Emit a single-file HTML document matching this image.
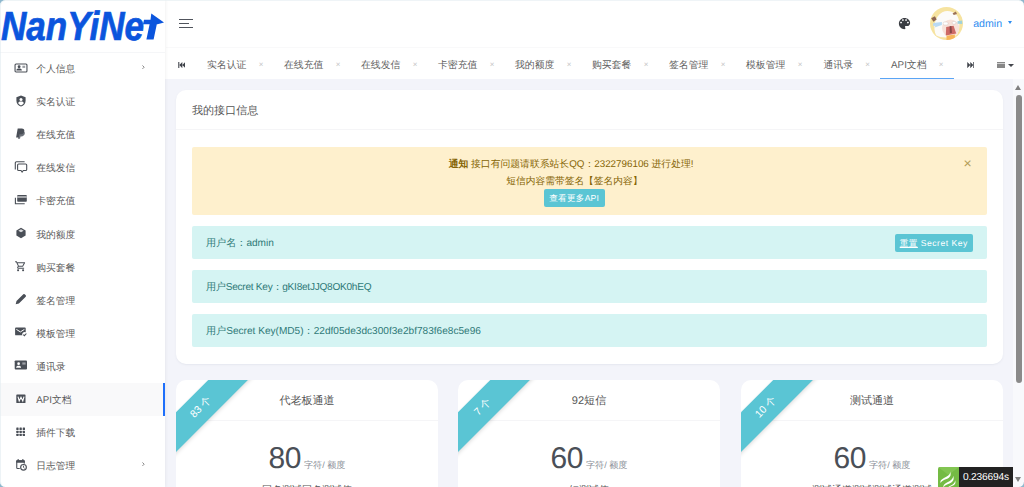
<!DOCTYPE html>
<html lang="zh">
<head>
<meta charset="utf-8">
<title>NanYiNet</title>
<style>
*{box-sizing:border-box;margin:0;padding:0}
html,body{text-rendering:geometricPrecision;width:1024px;height:487px;overflow:hidden;background:#f3f4fa;font-family:"Liberation Sans",sans-serif;color:#555;font-size:10px}
.abs{position:absolute}
#side{z-index:5;position:absolute;left:0;top:0;width:164.9px;height:487px;background:#fff;box-shadow:1px 0 3px rgba(0,0,0,.05)}
#logo{position:absolute;left:0;top:0;width:164.9px;height:52.7px;border-bottom:1px solid #f5f6f8}
.mi{position:absolute;left:0;width:164.9px;height:33.1px;line-height:33.1px;font-size:9.75px;color:#5a5a5a;white-space:nowrap}
.mi .tx{position:absolute;left:36.3px;top:1.6px}
.mi svg{position:absolute;left:13.7px;top:9.1px;width:14px;height:14px;fill:#4a4f57}
.mi svg.ch{position:absolute;left:142.2px;top:13.6px;width:2.6px;height:4.4px}
.mi.act{background:#f9f9fa}
.mi.act:after{content:"";position:absolute;right:0;top:0;width:1.6px;height:100%;background:#1e6ffb}
#head{position:absolute;left:165.5px;top:0;width:858.5px;height:47px;background:#fff}
#tabs{position:absolute;left:165.5px;top:47px;width:858.5px;height:32.2px;background:#fff}
.tab{position:absolute;top:2.6px;height:32.4px;line-height:32.4px;font-size:9.85px;color:#5f5f5f;white-space:nowrap}
.tx2{position:absolute;top:2.4px;height:32.4px;line-height:32.4px;font-size:8px;color:#c4c4c4}
#card{position:absolute;left:176px;top:90px;width:827px;height:273.6px;background:#fff;border-radius:10px;box-shadow:0 1px 2px rgba(120,125,150,.1)}
#card .hd{position:absolute;left:0;top:0;width:100%;height:39.5px;border-bottom:1px solid #f5f5f7;line-height:42px;padding-left:16px;font-size:11.05px;color:#555}
#alert{position:absolute;left:192px;top:147px;width:795px;height:67.5px;background:#fef0cd;border-radius:2px;color:#856404;text-align:center;font-size:9.9px}
.info{position:absolute;left:192px;width:795px;height:33px;background:#d5f4f3;border-radius:2px;color:#2f7a78;font-size:10.1px;line-height:35.8px;padding-left:14px;white-space:nowrap}
.btn{position:absolute;background:#5bc5d4;color:#fff;border-radius:2px;font-size:8.6px;text-align:center;white-space:nowrap}
.pc{position:absolute;top:380.3px;width:262px;height:120px;background:#fff;border-radius:10px;overflow:hidden}
.pc .t{position:absolute;left:0;top:0;width:100%;height:41px;line-height:43.4px;text-align:center;font-size:11.05px;color:#555;border-bottom:1px solid #f5f5f7}
.pc .n{position:absolute;left:0;width:100%;top:57.2px;text-align:center;white-space:nowrap;color:#4a4f57}
.pc .n b{font-weight:normal;font-size:30px;line-height:44px;letter-spacing:-0.5px}
.pc .n span{font-size:9.1px;color:#8a8f98;margin-left:3px}
.pc .d{position:absolute;left:0;width:100%;top:102.5px;text-align:center;font-size:10px;color:#555;white-space:nowrap}
.rb{position:absolute;left:-40px;top:7.5px;width:140px;height:27.6px;line-height:29.4px;background:#5ac5d4;color:#fff;font-size:10.4px;text-align:center;transform:rotate(-45deg);transform-origin:50% 50%;box-shadow:0 1.5px 4px rgba(0,0,0,.13)}
</style>
</head>
<body>
<div id="wrap" style="position:absolute;left:0;top:0;width:1024px;height:487px;overflow:hidden">
<div id="side">
  <div id="logo">
    <svg width="166" height="52" viewBox="0 0 166 52" style="position:absolute;left:0;top:0">
      <text x="1" y="39.500" font-family="Liberation Sans, sans-serif" font-weight="bold" font-style="italic" font-size="40.600" fill="#0b55dd" stroke="#0b55dd" stroke-width=".700" textLength="143" lengthAdjust="spacingAndGlyphs">NanYiNe</text>
      <path d="M146.400 39.600L149.600 24.300H143L144 19.700H150.500L151.300 13.500L164 22.500L157.500 24.300H156.800L153.600 39.600Z" fill="#0b55dd"/>
    </svg>
  </div>
  <div class="mi" style="top:51.5px"><svg viewBox="0 0 14 14"><rect x="1.05" y="3.05" width="11.9" height="7.9" rx="1" fill="none" stroke="#4a4f57" stroke-width="1.1"/><circle cx="5.100" cy="5.700" r="1.450"/><path d="M2.300 9.500c0-1.400 1.300-1.900 2.800-1.900s2.800.500 2.800 1.900z"/><rect x="8.4" y="4.7" width="2.8" height="2.2" fill="#9b9ea4"/></svg><span class="tx">个人信息</span><svg class="ch" viewBox="0 0 3 5"><path d="M.5.5l2 2-2 2" fill="none" stroke="#666" stroke-width=".9"/></svg></div>
  <div class="mi" style="top:84.6px"><svg viewBox="0 0 14 14"><path d="M7 1.5l4.6 1.8v3.5c0 2.8-2 5-4.600 5.700c-2.600-.700-4.600-2.900-4.600-5.700V3.300z"/><circle cx="7" cy="5.500" r="1.500" fill="#fff"/><path d="M4.200 9.300c0-1.300 1.500-1.700 2.800-1.700s2.800.400 2.800 1.700c-.600 1-1.600 1.700-2.800 2.100c-1.200-.400-2.200-1.100-2.800-2.100z" fill="#fff"/></svg><span class="tx">实名认证</span></div>
  <div class="mi" style="top:117.7px"><svg viewBox="0 0 14 14"><g transform="translate(-.8 -.3)"><path d="M6.300 4.400h2.900c1.700 0 2.700.900 2.400 2.500c-.300 1.900-1.600 2.800-3.500 2.800H7.300l-.500 2.400H4.700z" fill="#6b7078"/><path d="M4.500 1.900h4.100c1.800 0 2.800 1 2.500 2.600c-.300 2.100-1.700 3.100-3.700 3.100H6.200l-.600 3.300H2.900z"/></g></svg><span class="tx">在线充值</span></div>
  <div class="mi" style="top:150.8px"><svg viewBox="0 0 14 14"><path d="M10.600 1.700H2.500c-.700 0-1.200.500-1.200 1.200v6.700" fill="none" stroke="#4a4f57" stroke-width="1.100"/><path d="M4.700 4h6.900c.600 0 1.100.500 1.100 1.100v4.300c0 .600-.500 1.100-1.100 1.100H9.300L8.100 12l-1.100-1.500H4.700c-.600 0-1.100-.500-1.100-1.100V5.100c0-.600.500-1.100 1.100-1.100z" fill="none" stroke="#4a4f57" stroke-width="1.100"/></svg><span class="tx">在线发信</span></div>
  <div class="mi" style="top:183.9px"><svg viewBox="0 0 14 14"><rect x="3.200" y="1.900" width="9.600" height="6.800" rx=".800"/><rect x="3.200" y="3.500" width="9.600" height="1" fill="#fff"/><path d="M1.400 4.800v5.900h9.300" fill="none" stroke="#4a4f57" stroke-width="1.100"/></svg><span class="tx">卡密充值</span></div>
  <div class="mi" style="top:217px"><svg viewBox="0 0 14 14"><path d="M7 1.800l4.600 2.600v5.200L7 12.200 2.400 9.600V4.400z"/><path d="M7 3.300l2.700 1.500L7 6.300 4.300 4.800z" fill="#d9dadd"/></svg><span class="tx">我的额度</span></div>
  <div class="mi" style="top:250.1px"><svg viewBox="0 0 14 14"><g transform="translate(.6 1.3) scale(.5)"><path d="M15.550 13c.750 0 1.410-.410 1.750-1.030l3.580-6.490c.370-.660-.110-1.480-.870-1.480H5.210l-.940-2H1v2h2l3.600 7.590-1.350 2.440C4.520 15.370 5.480 17 7 17h12v-2H7l1.100-2h7.450zM6.160 6h12.150l-2.760 5H8.530L6.160 6zM7 18c-1.100 0-1.990.900-1.990 2S5.900 22 7 22s2-.900 2-2-.900-2-2-2zm10 0c-1.100 0-1.990.900-1.990 2s.890 2 1.990 2 2-.900 2-2-.900-2-2-2z"/></g></svg><span class="tx">购买套餐</span></div>
  <div class="mi" style="top:283.2px"><svg viewBox="0 0 14 14"><path d="M1.700 12.300L2.500 9.100L9.300 2.300Q10 1.600 10.700 2.300L11.700 3.300Q12.400 4 11.700 4.700L4.900 11.500Z"/></svg><span class="tx">签名管理</span></div>
  <div class="mi" style="top:316.3px"><svg viewBox="0 0 14 14"><rect x="1.100" y="2.600" width="10.600" height="7.700" rx=".900"/><path d="M2.400 4.400l4 2.500 4-2.500" fill="none" stroke="#fff" stroke-width="1"/><circle cx="10.700" cy="9.600" r="2.500" fill="#fff"/><path d="M9.300 9.600l1.100 1.100 2-2.200" fill="none" stroke="#4a4f57" stroke-width="1.100"/></svg><span class="tx">模板管理</span></div>
  <div class="mi" style="top:349.4px"><svg viewBox="0 0 14 14"><rect x=".700" y="2.400" width="12.300" height="9" rx=".900"/><circle cx="4.600" cy="5.700" r="1.350" fill="#fff"/><path d="M2.100 9.700c0-1.500 1.200-2 2.500-2s2.500.500 2.500 2z" fill="#fff"/><rect x="8.300" y="4.400" width="3.300" height="2.200" fill="#9b9ea4"/></svg><span class="tx">通讯录</span></div>
  <div class="mi act" style="top:382.5px"><svg viewBox="0 0 14 14"><rect x="2.300" y="2.400" width="9.200" height="8.700" rx=".700"/><path d="M4 4.600l1.200 4.300L7 5.200l1.800 3.700L10 4.600" fill="none" stroke="#fff" stroke-width="1.100" stroke-linejoin="miter"/></svg><span class="tx">API文档</span></div>
  <div class="mi" style="top:415.6px"><svg viewBox="0 0 14 14"><rect x="2.30" y="2.60" width="2.300" height="2.300" rx=".500"/><rect x="2.30" y="5.65" width="2.300" height="2.300" rx=".500"/><rect x="2.30" y="8.70" width="2.300" height="2.300" rx=".500"/><rect x="5.50" y="2.60" width="2.300" height="2.300" rx=".500"/><rect x="5.50" y="5.65" width="2.300" height="2.300" rx=".500"/><rect x="5.50" y="8.70" width="2.300" height="2.300" rx=".500"/><rect x="8.70" y="2.60" width="2.300" height="2.300" rx=".500"/><rect x="8.70" y="5.65" width="2.300" height="2.300" rx=".500"/><rect x="8.70" y="8.70" width="2.300" height="2.300" rx=".500"/></svg><span class="tx">插件下载</span></div>
  <div class="mi" style="top:448.7px"><svg viewBox="0 0 14 14"><rect x="2.750" y="2.750" width="7.500" height="7.700" rx=".800" fill="none" stroke="#4a4f57" stroke-width="1.100"/><rect x="2.200" y="2.200" width="8.600" height="2.500" rx=".600"/><rect x="3.600" y="1" width="1.100" height="2"/><rect x="8.300" y="1" width="1.100" height="2"/><circle cx="9.500" cy="9.300" r="3.900" fill="#fff"/><circle cx="9.500" cy="9.300" r="2.850" fill="none" stroke="#4a4f57" stroke-width="1.150"/><path d="M9.500 7.700v1.700l1.100.900" fill="none" stroke="#4a4f57" stroke-width=".900"/></svg><span class="tx">日志管理</span><svg class="ch" viewBox="0 0 3 5"><path d="M.5.5l2 2-2 2" fill="none" stroke="#666" stroke-width=".9"/></svg></div>
</div>
<div style="position:absolute;left:160px;top:0;width:10px;height:79.2px;background:#fff"></div>
<div id="head">
  <div style="position:absolute;left:13.3px;top:18.7px;width:14.1px;height:1.1px;background:#50545c"></div>
  <div style="position:absolute;left:13.3px;top:22.6px;width:10.7px;height:1.4px;background:#50545c"></div>
  <div style="position:absolute;left:13.3px;top:26.8px;width:14.1px;height:1.1px;background:#50545c"></div>
  <svg viewBox="0 0 24 24" style="position:absolute;left:731.5px;top:16px;width:15px;height:15px;fill:#3a3d43"><path d="M12 3c-4.970 0-9 4.030-9 9s4.030 9 9 9c.830 0 1.500-.670 1.500-1.500 0-.390-.150-.740-.390-1.010-.230-.260-.380-.610-.380-.990 0-.830.670-1.500 1.500-1.500H16c2.760 0 5-2.240 5-5 0-4.420-4.030-8-9-8zm-5.500 9c-.830 0-1.500-.670-1.500-1.500S5.670 9 6.500 9 8 9.670 8 10.500 7.330 12 6.500 12zm3-4C8.670 8 8 7.330 8 6.500S8.670 5 9.500 5s1.500.670 1.500 1.500S10.330 8 9.500 8zm5 0c-.830 0-1.500-.670-1.500-1.500S13.670 5 14.500 5s1.500.670 1.500 1.500S15.330 8 14.500 8zm3 4c-.830 0-1.500-.670-1.500-1.500S16.670 9 17.500 9s1.500.670 1.500 1.500-.670 1.500-1.500 1.500z"/></svg>
  <svg viewBox="0 0 34 34" style="position:absolute;left:764.600px;top:6.800px;width:33.400px;height:33.400px;border-radius:50%;overflow:hidden">
    <g>
      <rect width="34" height="34" fill="#f6e3a0"/>
      <path transform="translate(17 17) scale(.9) translate(-17 -17)" d="M5 30C1 22 3 9 12 4c5-2.500 12-1.500 16 3 4 5 4.500 14 1 22-4 4-18 5-24 1z" fill="#fcfbf9"/>
      <path d="M1.200 11.500l3.800-2.200 1.800 3.400-3.300 2.200z" fill="#8d6652"/><path d="M23 6.600l3.300-2 1.200 2.600-3.300 1z" fill="#9a7157"/>
      <circle cx="21" cy="21.500" r="8.800" fill="#f8e2da"/>
      <path d="M16.500 20.300L24 19l2.700 7.900-10.600 2.200z" fill="#cd6965"/>
      <path d="M20 19.600l1.800-.300.600 7-2.200.400z" fill="#874848"/>
      <rect x="13.400" y="15.300" width="5" height="3" rx="1.200" fill="#fff" stroke="#cdbfb8" stroke-width=".400"/><rect x="22.600" y="14.800" width="3.800" height="2.600" rx="1.100" fill="#fff" stroke="#cdbfb8" stroke-width=".400"/>
      <path d="M3.300 16.200l8.800-.800v3l-7.500 2.400 1-1.600-2.500.200z" fill="#b9daf4"/><path d="M28 14.400l4.800-.600v3.400l-4.800-.200z" fill="#9fd2dc"/>
      <path d="M16.800 29.400l8.500-1.500v6h-8.500z" fill="#f7b55a"/>
    </g>
  </svg>
  <div style="position:absolute;left:807.700px;top:18.400px;line-height:12px;font-size:10.600px;color:#2d8cf0;white-space:nowrap">admin</div>
  <div style="position:absolute;left:842.300px;top:21px;width:0;height:0;border-left:2.900px solid transparent;border-right:2.900px solid transparent;border-top:3.100px solid #2d8cf0"></div>
</div>
<div id="tabs"><div style="position:absolute;left:0;top:0;width:100%;height:1px;background:#f9f9fa"></div>
<svg viewBox="0 0 8 7" style="position:absolute;left:12.200px;top:14.900px;width:7.600px;height:6.200px;fill:#3e4249"><rect x="0" y="0" width="1.200" height="7"/><path d="M4.600 0v7L1.200 3.500zM8 0v7L4.600 3.500z"/></svg>
<div class="tab" style="left:41.5px">实名认证</div>
<div class="tx2" style="left:93.2px">×</div>
<div class="tab" style="left:118.5px">在线充值</div>
<div class="tx2" style="left:170.2px">×</div>
<div class="tab" style="left:195.5px">在线发信</div>
<div class="tx2" style="left:247.2px">×</div>
<div class="tab" style="left:272.5px">卡密充值</div>
<div class="tx2" style="left:324.2px">×</div>
<div class="tab" style="left:349.5px">我的额度</div>
<div class="tx2" style="left:401.2px">×</div>
<div class="tab" style="left:426.5px">购买套餐</div>
<div class="tx2" style="left:478.2px">×</div>
<div class="tab" style="left:503.5px">签名管理</div>
<div class="tx2" style="left:555.2px">×</div>
<div class="tab" style="left:580.5px">模板管理</div>
<div class="tx2" style="left:632.2px">×</div>
<div class="tab" style="left:658.0px">通讯录</div>
<div class="tx2" style="left:699.8px">×</div>
<div class="tab" style="left:725.5px">API文档</div>
<div class="tx2" style="left:773.3px">×</div>
<div style="position:absolute;left:714.500px;top:31px;width:74px;height:1.400px;background:#5aa5f5"></div>
<svg viewBox="0 0 8 7" style="position:absolute;left:801.300px;top:14.900px;width:7.600px;height:6.200px;fill:#3e4249"><rect x="6.800" y="0" width="1.200" height="7"/><path d="M3.400 0v7L6.800 3.500zM0 0v7L3.400 3.500z"/></svg>
<div style="position:absolute;left:831.500px;top:15.300px;width:8px;height:5.800px;background:linear-gradient(#888 0,#888 1.300px,#cfcfcf 1.300px,#cfcfcf 2.200px,#888 2.200px,#888 3.500px,#cfcfcf 3.500px,#cfcfcf 4.400px,#888 4.400px,#888 5.800px)"></div>
<div style="position:absolute;left:842.200px;top:16.900px;width:0;height:0;border-left:3.100px solid transparent;border-right:3.100px solid transparent;border-top:3.200px solid #44474d"></div>
</div>
<div id="card">
  <div class="hd">我的接口信息</div>
</div>
<div id="alert">
  <div style="position:absolute;left:12.6px;width:733px;top:10.2px;line-height:15px;font-size:9.82px"><b>通知</b> 接口有问题请联系站长QQ：2322796106 进行处理!</div>
  <div style="position:absolute;left:15.9px;width:733px;top:26.6px;line-height:15px;font-size:9.72px">短信内容需带签名【签名内容】</div>
  <div class="btn" style="left:352px;top:42px;width:60.5px;height:17.7px;line-height:18px;letter-spacing:.25px">查看更多API</div>
  <div style="position:absolute;left:771.5px;top:7.5px;font-size:14px;line-height:16px;color:#b39b55">×</div>
</div>
<div class="info" style="top:226px">用户名：admin<div class="btn" style="left:702px;top:8.3px;left:702.5px;width:78.5px;height:17.7px;line-height:19px;letter-spacing:.5px"><u>重置</u> Secret Key</div></div>
<div class="info" style="top:270px;letter-spacing:-.26px">用户Secret Key：gKI8etJJQ8OK0hEQ</div>
<div class="info" style="top:314px">用户Secret Key(MD5)：22df05de3dc300f3e2bf783f6e8c5e96</div>

<div class="pc" style="left:176px"><div class="t">代老板通道</div><div class="rb" style=""><span style="position:relative;left:-7.5px">83 个</span></div><div class="n"><b>80</b><span>字符/ 额度</span></div><div class="d">同名测试同名测试值</div></div>
<div class="pc" style="left:458px"><div class="t">92短信</div><div class="rb"><span style="position:relative;left:-7.5px">7 个</span></div><div class="n"><b>60</b><span>字符/ 额度</span></div><div class="d">短测试值</div></div>
<div class="pc" style="left:741px"><div class="t">测试通道</div><div class="rb"><span style="position:relative;left:-7.5px">10 个</span></div><div class="n"><b>60</b><span>字符/ 额度</span></div><div class="d">测试通道测试测试通道测试</div></div>

<div id="sb" style="position:absolute;left:1013.400px;top:79.400px;width:10.600px;height:408px;background:#f8f9fc">
  <div style="position:absolute;left:1.900px;top:5.400px;width:0;height:0;border-left:3.600px solid transparent;border-right:3.600px solid transparent;border-bottom:5px solid #808080"></div>
  <div style="position:absolute;left:2.500px;top:15.400px;width:5.900px;height:288.300px;border-radius:3px;background:#8a8a8a"></div>
  <div style="position:absolute;left:1.900px;top:397.200px;width:0;height:0;border-left:3.600px solid transparent;border-right:3.600px solid transparent;border-top:5px solid #808080"></div>
</div>
<div style="position:absolute;left:938.200px;top:467px;width:21px;height:20px;background:#74bb44;border-radius:2px 0 0 0;overflow:hidden">
  <svg viewBox="0 0 21 20" style="position:absolute;left:0;top:0;width:21px;height:20px"><path d="M0 0h21L10.500 8z" fill="#82c552"/><path d="M12 4c1 3-2 5-6 7-3 1.500-4 3-3.500 5 1-2 3-3 6-4 4-1.500 5-4 3.500-8z" fill="#fff"/><path d="M15 8c1 3-2 5.500-6 7.500-3 1.500-4 3-3.500 5 1-2 3-3 6-4 4-1.800 5-4.500 3.500-8.500z" fill="#fff"/><path d="M17 13c.500 2.500-2 4.500-5 6-2 1-3 2-3 3 2-2 4-2.500 6-3.500 2.500-1.300 3-3 2-5.500z" fill="#fff"/></svg>
</div>
<div style="position:absolute;left:959px;top:466.500px;width:54px;height:20.500px;background:#222;color:#fff;font-size:10.200px;line-height:21.400px;padding-left:4px;letter-spacing:-.200px;white-space:nowrap">0.236694s</div>
<div style="position:absolute;left:0;top:0;width:1024px;height:487px;border-radius:5.5px;box-shadow:0 0 0 8px #8db7cd;border-top:1px solid rgba(225,235,240,.55);border-left:1px solid rgba(225,235,240,.6);z-index:99"></div>
</div>
</body>
</html>
